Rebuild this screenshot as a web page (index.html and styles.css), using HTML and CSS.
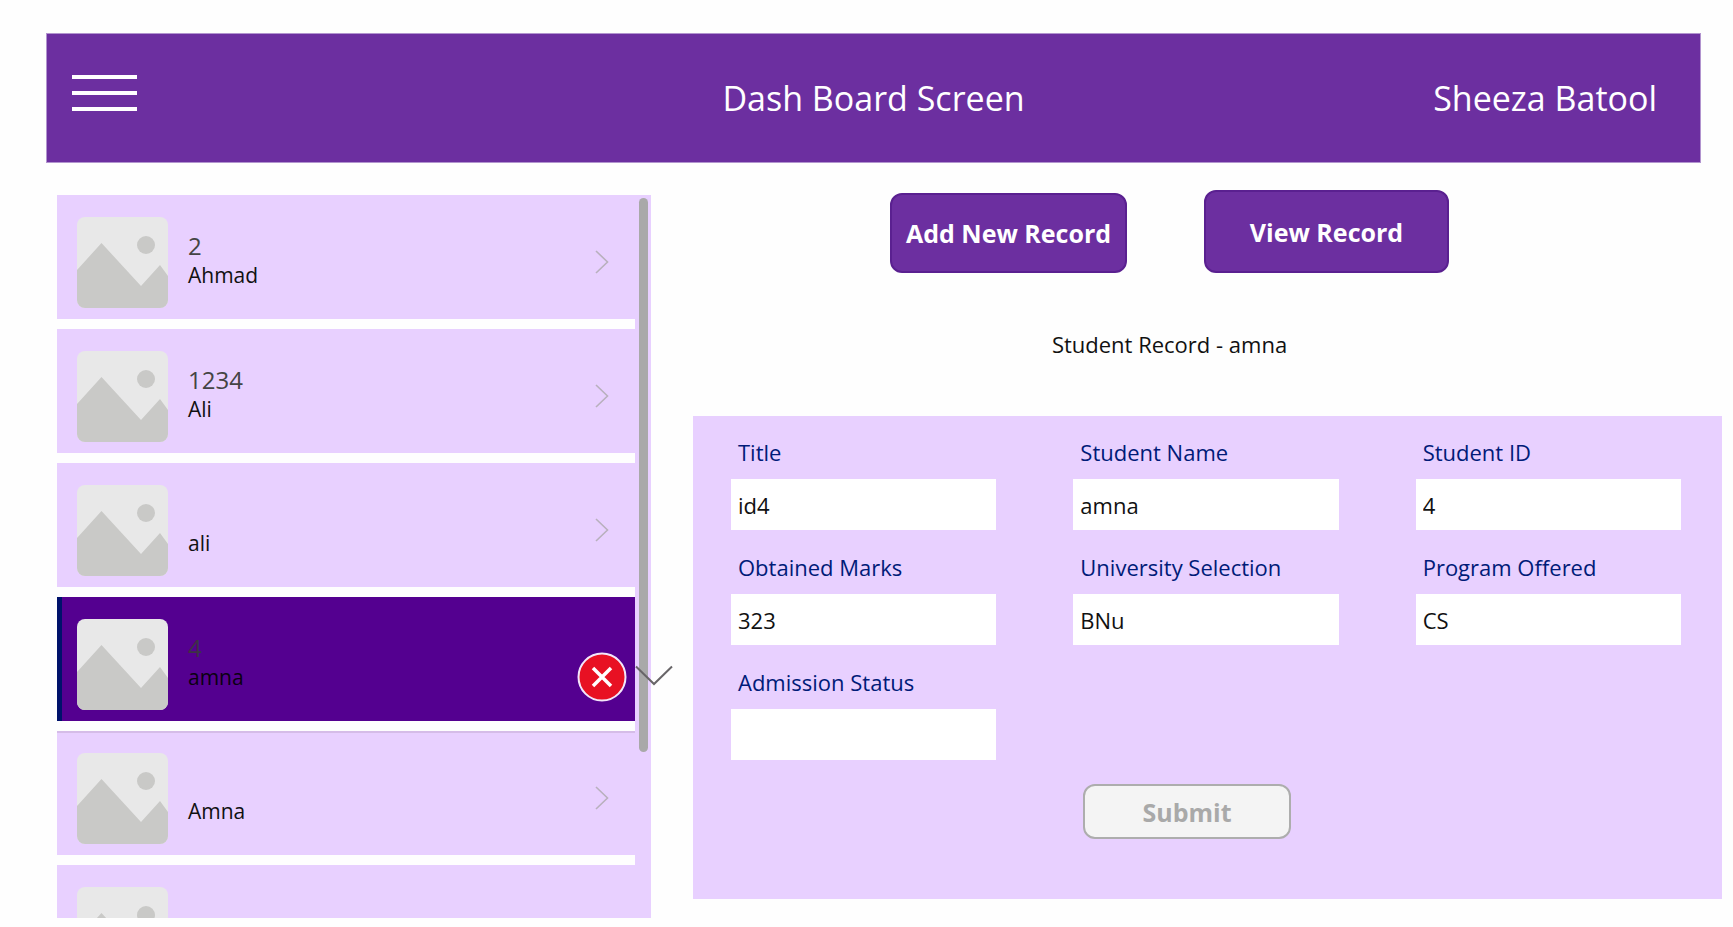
FILE: index.html
```html
<!DOCTYPE html>
<html lang="en">
<head>
<meta charset="utf-8">
<title>Dash Board Screen</title>
<link rel="stylesheet" href="styles.css">
</head>
<body>
<svg width="0" height="0" class="sprite" aria-hidden="true">
  <symbol id="photo" viewBox="0 0 91 91">
    <rect width="91" height="91" fill="#e8e8e8"/>
    <path d="M0 53 24.500 26 64 69 83 48 91 59V91H0Z" fill="#c9c9c7"/>
    <circle cx="69" cy="28" r="9" fill="#c9c9c7"/>
  </symbol>
  <symbol id="next" viewBox="0 0 14 24">
    <path d="M1 1 12.500 12 1 23" fill="none" stroke="#b8b0bd" stroke-width="1.600"/>
  </symbol>
</svg>

<header class="topbar">
  <button class="menu" type="button" aria-label="Menu">
    <svg width="65" height="38" viewBox="0 0 65 38" aria-hidden="true">
      <path d="M0 3H65M0 19H65M0 35H65" stroke="#fff" stroke-width="4"/>
    </svg>
  </button>
  <h1 class="topbar-title">Dash Board Screen</h1>
  <span class="user">Sheeza Batool</span>
</header>

<main class="layout">
  <section class="gallery" aria-label="Students">
    <ul class="list">
      <li class="item">
        <svg class="thumb"><use href="#photo"/></svg>
        <div class="info"><p class="num">2</p><p class="name">Ahmad</p></div>
        <button class="open" type="button" aria-label="Open Ahmad"><svg width="14" height="24"><use href="#next"/></svg></button>
      </li>
      <li class="item">
        <svg class="thumb"><use href="#photo"/></svg>
        <div class="info"><p class="num">1234</p><p class="name">Ali</p></div>
        <button class="open" type="button" aria-label="Open Ali"><svg width="14" height="24"><use href="#next"/></svg></button>
      </li>
      <li class="item">
        <svg class="thumb"><use href="#photo"/></svg>
        <div class="info"><p class="num"></p><p class="name">ali</p></div>
        <button class="open" type="button" aria-label="Open ali"><svg width="14" height="24"><use href="#next"/></svg></button>
      </li>
      <li class="item selected">
        <svg class="thumb"><use href="#photo"/></svg>
        <div class="info"><p class="num">4</p><p class="name">amna</p></div>
        <button class="remove" type="button" aria-label="Remove amna">
          <svg width="50" height="50" viewBox="0 0 50 50" aria-hidden="true">
            <circle cx="25" cy="25" r="23.500" fill="#e81123" stroke="#f3e6fa" stroke-width="2"/>
            <path d="M16 16 34 34M34 16 16 34" stroke="#fff" stroke-width="3.500"/>
          </svg>
        </button>
        <button class="expand" type="button" aria-label="Expand amna">
          <svg width="38" height="22" viewBox="0 0 38 22" aria-hidden="true">
            <path d="M1 1.500 19 19 37 1.500" fill="none" stroke="#686568" stroke-width="2"/>
          </svg>
        </button>
      </li>
      <li class="item after">
        <svg class="thumb"><use href="#photo"/></svg>
        <div class="info"><p class="num"></p><p class="name">Amna</p></div>
        <button class="open" type="button" aria-label="Open Amna"><svg width="14" height="24"><use href="#next"/></svg></button>
      </li>
      <li class="item clipped">
        <svg class="thumb"><use href="#photo"/></svg>
      </li>
    </ul>
    <div class="track"><div class="handle"></div></div>
  </section>

  <section class="record">
    <div class="actions">
      <button class="primary add" type="button">Add New Record</button>
      <button class="primary view" type="button">View Record</button>
    </div>
    <h2 class="record-title">Student Record - amna</h2>
    <form class="form">
      <div class="fields">
        <div class="field"><label for="title">Title</label><input id="title" type="text" value="id4"></div>
        <div class="field"><label for="student">Student Name</label><input id="student" type="text" value="amna"></div>
        <div class="field"><label for="sid">Student ID</label><input id="sid" type="text" value="4"></div>
        <div class="field"><label for="marks">Obtained Marks</label><input id="marks" type="text" value="323"></div>
        <div class="field"><label for="uni">University Selection</label><input id="uni" type="text" value="BNu"></div>
        <div class="field"><label for="program">Program Offered</label><input id="program" type="text" value="CS"></div>
        <div class="field"><label for="status">Admission Status</label><input id="status" type="text" value=""></div>
      </div>
      <div class="form-footer"><button class="submit" type="submit" disabled>Submit</button></div>
    </form>
  </section>
</main>
</body>
</html>
```
FILE: styles.css
```css
* { box-sizing: border-box; }

body {
  margin: 0;
  background: #fefefe;
  color: #111;
  font-family: "Open Sans", "Noto Sans", sans-serif;
  font-size: 22px;
  line-height: 28px;
}

h1, h2, p, ul { margin: 0; padding: 0; font-weight: 400; }
ul { list-style: none; }
button { font-family: inherit; cursor: pointer; }
.sprite { position: absolute; }

.topbar {
  display: grid;
  grid-template-columns: 1fr auto 1fr;
  align-items: center;
  min-height: 130px;
  margin: 33px 32px 27px 46px;
  padding: 0 25px;
  border: 1px solid #b294cf;
  background: #6c2fa0;
  color: #fff;
  font-size: 34px;
  line-height: 48px;
}
.menu {
  justify-self: start;
  padding: 0 0 10px;
  border: 0;
  background: none;
}
.menu svg { display: block; }
.topbar-title { font-size: 34px; }
.user { justify-self: end; padding-right: 18px; }

.layout {
  display: grid;
  grid-template-columns: 594fr 1029fr;
  gap: 42px;
  align-items: start;
  padding: 0 11px 9px 57px;
}

.gallery {
  display: flex;
  margin-top: 5px;
  background: #e8d0ff;
}
.list {
  flex: 1;
  display: grid;
  gap: 10px;
  background: #fefefe;
}
.item {
  position: relative;
  display: flex;
  align-items: flex-start;
  min-height: 124px;
  padding: 22px 24px 10px 20px;
  background: #e8d0ff;
}
.thumb {
  width: 91px;
  height: 91px;
  border-radius: 8px;
}
.info { flex: 1; padding: 14px 0 0 20px; }
.num {
  min-height: 30px;
  color: #444;
  font-size: 24px;
  line-height: 30px;
}
.name { font-size: 21px; }
.open {
  align-self: center;
  margin-bottom: 2px;
  padding: 0 2px;
  border: 0;
  background: none;
}
.open svg, .remove svg, .expand svg { display: block; }
.selected { background: #540090; box-shadow: inset 5px 0 #00126b; }
.selected .num { color: #3d3245; }
.selected .name { color: #0a0010; }
.remove {
  align-self: center;
  margin: 24px -16px 0 0;
  padding: 0;
  border: 0;
  background: none;
}
.expand {
  position: absolute;
  top: 68px;
  left: 100%;
  z-index: 1;
  padding: 0;
  border: 0;
  background: none;
}
.after { box-shadow: inset 0 2px #d5bce8; }
.clipped { min-height: 0; height: 53px; overflow: hidden; }
.track { width: 16px; padding: 3px 3px 0 4px; }
.handle {
  height: 77%;
  border-radius: 5px;
  background: #a9a9a9;
}

.actions {
  display: flex;
  justify-content: center;
  align-items: flex-end;
  gap: 77px;
  padding-right: 76px;
}
.primary {
  padding: 0;
  border: 2px solid #5a2090;
  border-radius: 12px;
  background: #6c2fa0;
  color: #fff;
  font-size: 25px;
  font-weight: 700;
  line-height: 34px;
}
.add { width: 237px; height: 80px; }
.view { width: 245px; height: 83px; }
.record-title {
  margin: 57px 0 58px;
  padding-right: 76px;
  font-size: 22px;
  text-align: center;
}

.form {
  padding: 22px 41px 60px 38px;
  background: #e8d0ff;
}
.fields {
  display: grid;
  grid-template-columns: repeat(3, 1fr);
  gap: 23px 77px;
}
.field { display: grid; gap: 13px; min-width: 0; }
.field label { padding-left: 7px; color: #001b78; }
.field input {
  width: 100%;
  height: 51px;
  padding: 0 7px;
  border: 0;
  background: #fff;
  color: #111;
  font: inherit;
}
.form-footer {
  display: flex;
  justify-content: center;
  padding: 24px 38px 0 0;
}
.submit {
  width: 208px;
  height: 55px;
  padding: 0;
  border: 2px solid #adadad;
  border-radius: 12px;
  background: #f4f4f4;
  color: #a9a9a9;
  font-size: 25px;
  font-weight: 700;
  line-height: 34px;
}
```
